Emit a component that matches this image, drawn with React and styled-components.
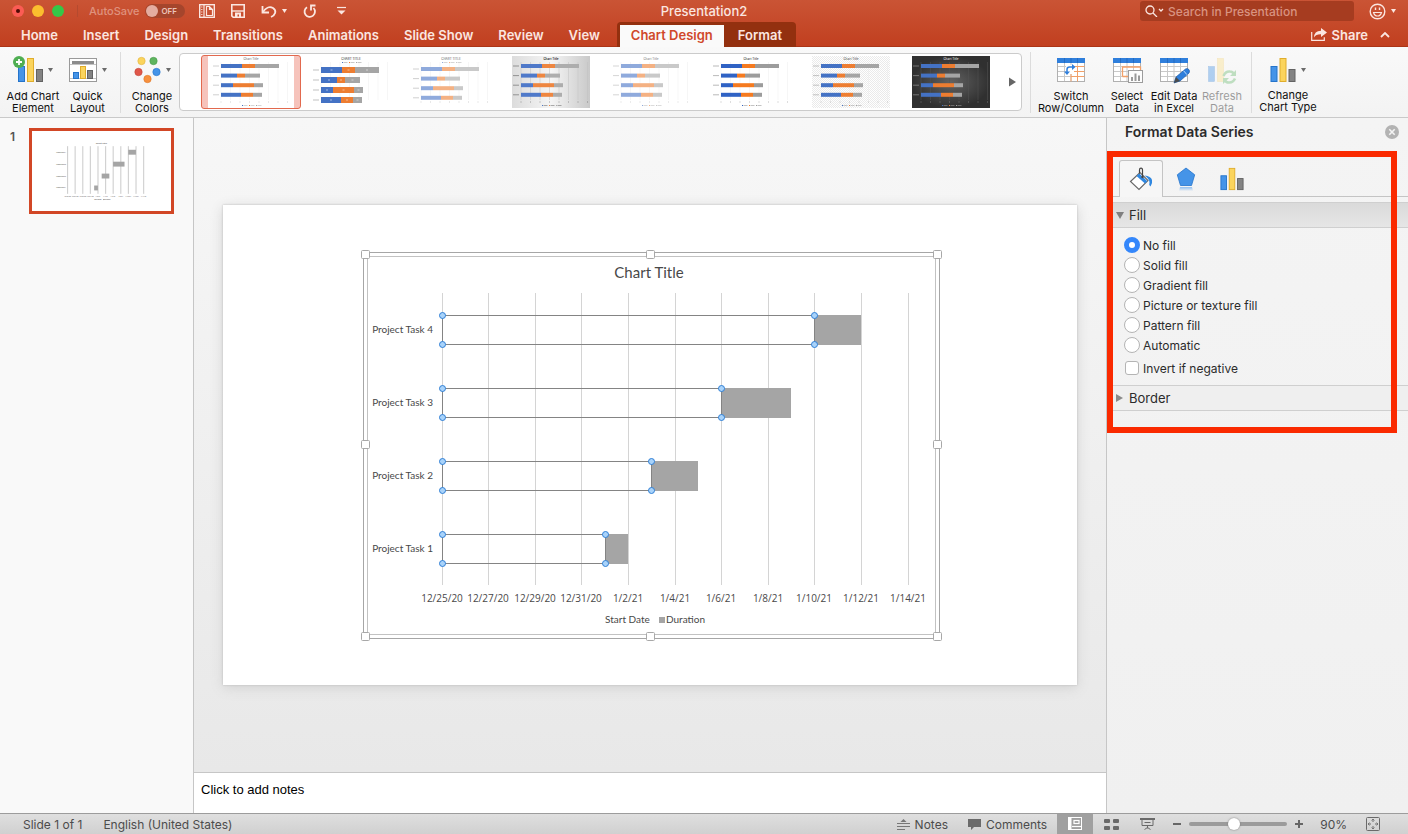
import React from "react";
import { useState } from "react";
import styled, { createGlobalStyle } from "styled-components";

const GlobalStyle = createGlobalStyle`
  * {
    box-sizing: border-box;
  }
  body {
    margin: 0;
    font-family: Inter, "Liberation Sans", sans-serif;
    font-size: 12px;
    color: #2b2b2b;
  }
  button, input, textarea {
    font: inherit;
    color: inherit;
  }
  button {
    padding: 0;
    border: 0;
    background: none;
  }
  svg {
    display: block;
    flex: none;
  }
`;

const Window = styled.div`
  display: flex;
  flex-direction: column;
  min-height: 100vh;
`;

/* header */
const Header = styled.header`
  background: linear-gradient(to bottom, #ca5435, #c13f1f);
  box-shadow: inset 0 -1px 0 #ab3417;
  color: #fbe6e0;
`;

const TitleBar = styled.div`
  display: grid;
  grid-template-columns: 1fr auto 1fr;
  align-items: center;
  height: 22px;
`;

const TitleLeft = styled.div`
  display: flex;
  align-items: center;
  padding-left: 12px;
`;

const Lights = styled.div`
  display: flex;
  gap: 8px;
  padding-right: 13px;
  margin-right: 11px;
  border-right: 1px solid #b54a2f;
`;

const Light = styled.button`
  display: flex;
  align-items: center;
  justify-content: center;
  width: 12px;
  height: 12px;
  border-radius: 50%;
  background: ${(props) => props.$color};
`;

const LightDot = styled.span`
  width: 4px;
  height: 4px;
  border-radius: 50%;
  background: #4d0a05;
`;

const AutoSave = styled.span`
  font-size: 11px;
  font-weight: 500;
  color: #df927e;
  margin-right: 6px;
`;

const Toggle = styled.button`
  display: flex;
  align-items: center;
  gap: 3px;
  width: 40px;
  height: 14px;
  padding: 0 1px;
  border-radius: 7px;
  background: #a5452c;
  color: #ecc4b9;
  font-size: 8px;
  font-weight: 600;
`;

const Knob = styled.span`
  width: 12px;
  height: 12px;
  border-radius: 50%;
  background: #e4ada0;
`;

const QuickTools = styled.div`
  display: flex;
  align-items: center;
  gap: 16px;
  margin-left: 14px;
`;

const QuickButton = styled.button`
  display: flex;
  align-items: center;
  gap: 5px;
`;

const DocName = styled.h1`
  margin: 0;
  font-size: 13px;
  font-weight: 500;
  line-height: 22px;
`;

const TitleRight = styled.div`
  display: flex;
  align-items: center;
  justify-content: flex-end;
  gap: 15px;
  padding-right: 12px;
`;

const Search = styled.label`
  display: flex;
  align-items: center;
  gap: 4px;
  width: 214px;
  height: 20px;
  padding: 0 5px;
  border-radius: 3px;
  background: #a63c20;
`;

const SearchInput = styled.input`
  flex: 1;
  min-width: 0;
  padding: 0;
  border: 0;
  outline: 0;
  background: none;
  font-weight: 500;
  &::placeholder {
    color: #d99380;
    opacity: 1;
  }
`;

const TabRow = styled.div`
  display: flex;
  align-items: flex-end;
  height: 25px;
  padding: 0 18px 0 9px;
`;

const Tabs = styled.nav`
  display: flex;
  align-items: flex-end;
  flex: 1;
`;

const Tab = styled.a`
  height: 22px;
  padding: 0 13px 0 12px;
  font-size: 13px;
  font-weight: 600;
  line-height: 20px;
  white-space: nowrap;
  text-decoration: none;
  color: #fbe6e0;
`;

const ContextTabs = styled.div`
  display: flex;
  align-items: flex-end;
  height: 25px;
  margin-left: 4px;
  padding-left: 3px;
  border-radius: 4px 4px 0 0;
  background: #93300f;
`;

const ContextTab = styled(Tab)`
  padding: 0 ${(props) => (props.$active ? 11 : 14)}px;
  background: ${(props) => (props.$active ? "#fafafa" : "none")};
  color: ${(props) => (props.$active ? "#d0482a" : "#fbe6e0")};
`;

const ShareButton = styled.button`
  display: flex;
  align-items: center;
  gap: 5px;
  height: 25px;
  margin-right: 12px;
  font-size: 13px;
  font-weight: 600;
`;

const CollapseButton = styled.button`
  display: flex;
  align-items: center;
  height: 25px;
`;

/* ribbon */
const Ribbon = styled.div`
  display: flex;
  align-items: center;
  height: 71px;
  padding-right: 90px;
  background: linear-gradient(to bottom, #f9f9f9, #f3f3f3);
  border-bottom: 1px solid #c9c9c9;
`;

const RibbonButton = styled.button`
  display: flex;
  flex-direction: column;
  align-items: center;
  flex: none;
  gap: 6px;
  width: ${(props) => props.$width}px;
  padding-top: 6px;
  font-size: 11px;
  line-height: 12px;
  color: #111;
  opacity: ${(props) => (props.disabled ? 0.4 : 1)};
`;

const IconRow = styled.span`
  display: flex;
  align-items: center;
  gap: 5px;
`;

const RibbonLabel = styled.span`
  white-space: pre;
  text-align: center;
`;

const Divider = styled.div`
  flex: none;
  width: 1px;
  height: 61px;
  margin: 0 ${(props) => props.$after}px 0 ${(props) => props.$before}px;
  background: #dcdcdc;
`;

const Gallery = styled.div`
  display: flex;
  align-items: center;
  flex: 1;
  min-width: 0;
  height: 58px;
  padding-left: 21px;
  border: 1px solid #cbcbcb;
  border-radius: 4px;
  background: #fff;
`;

const GalleryItems = styled.div`
  display: flex;
  flex: 1;
  min-width: 0;
  overflow: hidden;
`;

const GalleryItem = styled.button`
  display: flex;
  flex: none;
  align-items: center;
  justify-content: center;
  width: 100px;
  height: 54px;
  border: 1px solid ${(props) => (props.$active ? "#e2694e" : "transparent")};
  border-radius: 3px;
  background: ${(props) =>
    props.$active
      ? "linear-gradient(to right, #f6c3bb 6px, #fff 6px, #fff calc(100% - 6px), #f6c3bb calc(100% - 6px))"
      : "none"};
`;

const GalleryNext = styled.button`
  width: 12px;
  height: 54px;
`;

/* body */
const Main = styled.main`
  display: flex;
  flex: 1;
`;

const Slides = styled.aside`
  display: flex;
  align-items: flex-start;
  gap: 12px;
  flex: none;
  width: 194px;
  padding: 10px;
  background: #f9f9f9;
  border-right: 1px solid #c6c6c6;
`;

const SlideNumber = styled.span`
  width: 7px;
  font-size: 12px;
  font-weight: 600;
  line-height: 18px;
  color: #555;
`;

const SlideThumb = styled.button`
  display: flex;
  align-items: center;
  justify-content: center;
  width: 145px;
  height: 86px;
  border: 3px solid #d24726;
  background: #fff;
`;

const Center = styled.section`
  display: flex;
  flex: 1;
  flex-direction: column;
  min-width: 0;
`;

const Canvas = styled.div`
  display: flex;
  align-items: center;
  justify-content: center;
  flex: 1;
  padding: 0 29px;
  background: linear-gradient(to bottom, #f7f7f7, #e8e8e8);
`;

const Slide = styled.div`
  display: flex;
  align-items: center;
  justify-content: center;
  width: 100%;
  aspect-ratio: 16 / 9;
  background: #fff;
  box-shadow: 0 0 2px #bbb, 0 3px 12px #d2d2d2;
`;

const Notes = styled.textarea`
  display: block;
  height: 41px;
  padding: 9px 7px;
  border: 0;
  border-top: 1px solid #c6c6c6;
  outline: 0;
  resize: none;
  background: #fff;
  font-family: "Liberation Sans", Arial, sans-serif;
  font-size: 13px;
  line-height: 16px;
  &::placeholder {
    color: #000;
    opacity: 1;
  }
`;

const Pane = styled.aside`
  flex: none;
  width: 302px;
  background: linear-gradient(to bottom, #f4f4f4, #f0f0f0);
  border-left: 1px solid #c6c6c6;
`;

const PaneHeader = styled.div`
  display: flex;
  align-items: center;
  justify-content: space-between;
  height: 27px;
  padding: 0 9px 0 18px;
  margin-bottom: 15px;
`;

const PaneTitle = styled.h2`
  margin: 0;
  font-size: 14px;
  font-weight: 600;
`;

const PaneBody = styled.div`
  position: relative;
`;

const Highlight = styled.div`
  position: absolute;
  inset: -9px 11px -22px 0;
  border: 6px solid #fa2a00;
  pointer-events: none;
`;

const PaneTabs = styled.div`
  display: flex;
  height: 37px;
  padding-left: 12px;
  margin-bottom: 5px;
  box-shadow: inset 0 -1px 0 #c4c4c4;
`;

const PaneTab = styled.button`
  display: flex;
  align-items: center;
  justify-content: center;
  width: ${(props) => (props.$active ? 44 : 46)}px;
  border: 1px solid ${(props) => (props.$active ? "#c4c4c4" : "transparent")};
  border-bottom: 0;
  border-radius: 3px 3px 0 0;
  background: ${(props) => (props.$active ? "#f6f6f6" : "none")};
`;

const SectionButton = styled.button`
  display: flex;
  align-items: center;
  gap: 5px;
  width: 100%;
  height: 26px;
  padding: 0 9px;
  border-top: 1px solid #cfcfcf;
  border-bottom: 1px solid #cfcfcf;
  background: ${(props) =>
    props.$open ? "linear-gradient(to bottom, #dadada, #e6e6e6)" : "#efefef"};
  font-size: 13px;
`;

const Options = styled.div`
  display: flex;
  flex-direction: column;
  height: 157px;
  padding: 7px 0 0 17px;
`;

const Option = styled.label`
  display: flex;
  align-items: center;
  gap: 3px;
  height: 20px;
  font-size: 12px;
`;

const CheckOption = styled(Option)`
  margin-top: 3px;
`;

const Radio = styled.input`
  appearance: none;
  width: 16px;
  height: 16px;
  margin: 0;
  border: 1px solid #b4b4b4;
  border-radius: 50%;
  background: #fff;
  &:checked {
    border: 5px solid #3487fb;
  }
`;

const Check = styled.input`
  appearance: none;
  width: 14px;
  height: 14px;
  margin: 0 1px;
  border: 1px solid #b4b4b4;
  border-radius: 3px;
  background: #fff;
  &:checked {
    background: #3487fb;
  }
`;

/* status bar */
const StatusBar = styled.footer`
  display: flex;
  align-items: center;
  height: 21px;
  padding: 0 28px 0 23px;
  border-top: 1px solid #9c9c9c;
  background: linear-gradient(to bottom, #dfdfdf, #d0d0d0);
  color: #4c4c4c;
`;

const StatusText = styled.span`
  margin-right: 21px;
`;

const Spacer = styled.div`
  flex: 1;
`;

const StatusButton = styled.button`
  display: flex;
  align-items: center;
  gap: 5px;
  margin: 0 10px;
`;

const ViewButton = styled.button`
  display: flex;
  align-items: center;
  justify-content: center;
  width: 36px;
  height: 20px;
  background: ${(props) => (props.$active ? "#a0a0a0" : "none")};
`;

const Zoom = styled.div`
  display: flex;
  align-items: center;
  gap: 8px;
  margin: 0 17px 0 8px;
`;

const ZoomSlider = styled.input`
  appearance: none;
  width: 98px;
  height: 12px;
  margin: 0;
  background: none;
  &::-webkit-slider-runnable-track {
    height: 4px;
    border-radius: 2px;
    background: #9b9b9b;
  }
  &::-webkit-slider-thumb {
    appearance: none;
    width: 12px;
    height: 12px;
    margin-top: -4px;
    border-radius: 50%;
    background: #fff;
    box-shadow: 0 0 2px #777;
  }
`;

const ZoomValue = styled.span`
  margin-right: 19px;
`;

function Caret({ color = "#6b6b6b" }) {
  return (
    <svg width="5" height="4" viewBox="0 0 5 4">
      <path d="M0 0h5L2.5 4z" fill={color} />
    </svg>
  );
}

function BarsIcon({ size = 26 }) {
  return (
    <svg width={size} height={size} viewBox="0 0 26 26">
      <rect x="1" y="9.5" width="6" height="15" fill="#4594e8" stroke="#2574cb" />
      <rect x="10" y="1.5" width="6" height="23" fill="#fbd45c" stroke="#e0ad2c" />
      <rect x="19" y="12.5" width="6" height="12" fill="#838383" stroke="#636363" />
    </svg>
  );
}

function AddElementIcon() {
  return (
    <svg width="30" height="28" viewBox="0 0 30 28">
      <rect x="5.5" y="10.5" width="6" height="15" fill="#4594e8" stroke="#2574cb" />
      <rect x="14.5" y="2.5" width="6" height="23" fill="#fbd45c" stroke="#e0ad2c" />
      <rect x="23.5" y="13.5" width="6" height="12" fill="#838383" stroke="#636363" />
      <circle cx="6" cy="6" r="6" fill="#4fae52" />
      <path d="M6 3v6M3 6h6" stroke="#fff" strokeWidth="1.8" />
    </svg>
  );
}

function LayoutIcon() {
  return (
    <svg width="28" height="28" viewBox="0 0 28 28">
      <rect x=".5" y="2.5" width="27" height="23" fill="#fff" stroke="#9a9a9a" />
      <path d="M1 8.5h26M1 22.5h26" stroke="#c4c4c4" />
      <rect x="3" y="5" width="22" height="3" fill="#8c8c8c" />
      <rect x="4.5" y="16.5" width="5" height="6" fill="#4594e8" stroke="#2574cb" />
      <rect x="11.5" y="10.5" width="5" height="12" fill="#fbd45c" stroke="#e0ad2c" />
      <rect x="18.5" y="14.5" width="5" height="8" fill="#838383" stroke="#636363" />
    </svg>
  );
}

function ColorsIcon() {
  return (
    <svg width="27" height="28" viewBox="0 0 27 28">
      <circle cx="7.5" cy="5" r="3.7" fill="#fbd45c" stroke="#e0b440" strokeWidth=".6" />
      <circle cx="19.5" cy="5" r="3.7" fill="#5fb55f" stroke="#479a49" strokeWidth=".6" />
      <circle cx="4.5" cy="16" r="3.7" fill="#e0574a" stroke="#c24338" strokeWidth=".6" />
      <circle cx="22.5" cy="16" r="3.7" fill="#4594e8" stroke="#2574cb" strokeWidth=".6" />
      <circle cx="13.5" cy="23" r="3.7" fill="#f7903e" stroke="#dd7726" strokeWidth=".6" />
    </svg>
  );
}

function TableIcon({ children }) {
  return (
    <svg width="32" height="28" viewBox="0 0 32 28">
      <rect x="2.5" y="2.5" width="27" height="23" fill="#fff" stroke="#b0b0b0" />
      <path d="M3 10.5h26M3 15.5h26M3 20.5h26M9.5 6v19M16 6v19M22.5 6v19" stroke="#c9c9c9" />
      <rect x="2" y="2" width="28" height="5" fill="#2f7fdc" />
      <path d="M9.5 2v5M16 2v5M22.5 2v5" stroke="#1f64b8" strokeWidth=".7" />
      {children}
    </svg>
  );
}

function SwitchIcon() {
  return (
    <TableIcon>
      <path d="M16 10.5h13.5M16 15.5h13.5M16 20.5h13.5M16 15v10.5M22.5 10v15.5" stroke="#f2a068" fill="none" />
      <rect x="11" y="9" width="8" height="9" fill="#fff" />
      <path d="M12 17v-3.5q0-2.5 2.5-2.5h3.5" stroke="#2f7fdc" strokeWidth="1.5" fill="none" />
      <path d="M17 8l3.500 3-3.500 3zM9 15.500h6l-3 3.500z" fill="#2f7fdc" />
    </TableIcon>
  );
}

function SelectIcon() {
  return (
    <TableIcon>
      <path d="M11.5 20.5v-9.5h18v6M11.5 20.5h6" stroke="#f2a068" strokeWidth="1.3" fill="none" />
      <rect x="17.5" y="14.5" width="14" height="12" fill="#fdfdfd" stroke="#9c9c9c" />
      <path d="M21 25v-4M24.5 25v-7.500M28 25v-5.500" stroke="#9a9a9a" strokeWidth="2" />
    </TableIcon>
  );
}

function EditIcon() {
  return (
    <TableIcon>
      <path d="M16 27l2-6 9.5-8q2-1 3.300.500t.2 3.500l-9 8z" fill="#2f7fdc" stroke="#1f5ba8" strokeWidth=".7" />
      <path d="M16 27l2-6 4 4z" fill="#4b4b4b" />
      <path d="M25.5 14.7l3.500 4" stroke="#bcdcff" />
    </TableIcon>
  );
}

function RefreshIcon() {
  return (
    <svg width="32" height="28" viewBox="0 0 32 28">
      <rect x="2.5" y="10.5" width="6" height="15" fill="#4594e8" stroke="#2574cb" strokeWidth=".5" />
      <rect x="11.5" y="2.5" width="6" height="23" fill="#fbe08a" stroke="#efc85c" strokeWidth=".5" />
      <path d="M17.5 20q2-5 6.500-4.500 2.500 0 4 2.500M29 22.500q-2 4.500-6.500 4-2.500 0-4-2.500" stroke="#6dbb70" strokeWidth="2.6" fill="none" />
      <path d="M30 14v6h-6zM17 28v-6h6z" fill="#6dbb70" />
    </svg>
  );
}

const styles = [
  { title: "Chart Title", text: "#8c8c8c", colors: ["#4472c4", "#ed7d31", "#a5a5a5"] },
  { title: "CHART TITLE", text: "#666", top: true, thick: true, colors: ["#4472c4", "#ed7d31", "#a5a5a5"] },
  { title: "CHART TITLE", text: "#8c8c8c", top: true, colors: ["#8faadc", "#f4b183", "#c9c9c9"] },
  { title: "Chart Title", text: "#222", bg: "url(#silver)", line: "#c0c0c0", colors: ["#4f79c9", "#ee8640", "#adadad"] },
  { title: "Chart Title", text: "#9a9a9a", colors: ["#8faadc", "#f4b183", "#c9c9c9"] },
  { title: "Chart Title", text: "#555", colors: ["#2f62c4", "#f57a1f", "#9c9c9c"] },
  { title: "Chart Title", text: "#777", bg: "url(#hatch)", colors: ["#4472c4", "#ed7d31", "#a5a5a5"] },
  { title: "Chart Title", text: "#d5d5d5", bg: "url(#dark)", line: "#555", colors: ["#4472c4", "#ed7d31", "#a5a5a5"] },
];

const rows = [
  [21, 13, 24],
  [16, 8, 15],
  [12, 21, 9],
  [20, 12, 9],
];

function StylePreview({ look }) {
  const height = look.thick ? 6 : 4;
  const start = look.top ? 11 : 8;
  return (
    <svg width="78" height="52" viewBox="0 0 78 52" aria-hidden="true">
      <defs>
        <linearGradient id="silver" x1="0" y1="0" x2="1" y2="0">
          <stop offset="0" stopColor="#dcdcdc" />
          <stop offset=".5" stopColor="#f5f5f5" />
          <stop offset="1" stopColor="#c9c9c9" />
        </linearGradient>
        <radialGradient id="dark">
          <stop offset="0" stopColor="#626262" />
          <stop offset="1" stopColor="#303030" />
        </radialGradient>
        <pattern id="hatch" width="2" height="2" patternUnits="userSpaceOnUse">
          <rect width="2" height="2" fill="#fff" />
          <path d="M0 0l2 2" stroke="#e4e4e4" strokeWidth=".8" />
        </pattern>
      </defs>
      {look.bg && <rect width="78" height="52" fill={look.bg} />}
      {[9, 18.5, 28, 37.5, 47, 56.5, 66, 75.5].map((x) => (
        <g key={x}>
          <path d={`M${x} 6v38`} stroke={look.line || "#ececec"} strokeWidth=".5" />
          {!look.thick && <rect x={x - 0.5} y="45.5" width="1" height="1" fill={look.text} opacity=".4" />}
        </g>
      ))}
      <text x="39" y="4" textAnchor="middle" fontSize="3" fontWeight="600" fill={look.text}>
        {look.title}
      </text>
      {rows.map((row, i) => {
        const y = start + i * (look.thick ? 10 : 9.6);
        let x = 9;
        return (
          <g key={i}>
            <path d={`M1 ${y + height / 2}h6`} stroke={look.text} strokeWidth="1" opacity=".4" />
            {row.map((value, j) => {
              const left = x;
              x += value;
              return (
                <g key={j}>
                  <rect x={left} y={y} width={value} height={height} fill={look.colors[j]} />
                  {look.thick && (
                    <rect x={left + value / 2 - 1} y={y + 2.5} width="2" height="1" fill="#fff" opacity=".5" />
                  )}
                </g>
              );
            })}
          </g>
        );
      })}
      {look.colors.map((color, i) => (
        <g key={i}>
          <rect x={30 + i * 7} y={look.top ? 6 : 49} width="1" height="1" fill={color} />
          <path d={`M${31.5 + i * 7} ${look.top ? 6.5 : 49.5}h4`} stroke={look.text} strokeWidth=".7" opacity=".5" />
        </g>
      ))}
    </svg>
  );
}

// days are counted from 12/25/20
const tasks = [
  { name: "Project Task 4", start: 16, duration: 2 },
  { name: "Project Task 3", start: 12, duration: 3 },
  { name: "Project Task 2", start: 9, duration: 2 },
  { name: "Project Task 1", start: 7, duration: 1 },
];

const dates = [
  "12/25/20",
  "12/27/20",
  "12/29/20",
  "12/31/20",
  "1/2/21",
  "1/4/21",
  "1/6/21",
  "1/8/21",
  "1/10/21",
  "1/12/21",
  "1/14/21",
];

const dayX = (day) => Math.floor(82 + day * 23.3);

const ChartSvg = styled.svg`
  width: ${(props) => props.$width}px;
  height: auto;
  max-width: 100%;
  overflow: visible;
  font-family: Lato, sans-serif;
  font-size: 10px;
  fill: #484848;
`;

const AxisLabel = styled.text`
  font-family: "Open Sans", sans-serif;
`;

function Chart({ width, selected }) {
  return (
    <ChartSvg $width={width} viewBox="-1 0 582 392" aria-hidden={!selected}>
      {selected && (
        <g fill="none">
          <rect x="3.5" y="3.5" width="576" height="386" stroke="#a6a6a6" />
          <rect x="7.5" y="7.5" width="568" height="378" stroke="#c2c2c2" />
        </g>
      )}
      <text x="289" y="29" textAnchor="middle" fontSize="15">
        Chart Title
      </text>
      {dates.map((date, i) => (
        <g key={date}>
          <path
            d={`M${dayX(i * 2) + 0.5} 44v292`}
            stroke={selected ? "#d4d4d4" : "#cacaca"}
            vectorEffect="non-scaling-stroke"
          />
          <AxisLabel x={dayX(i * 2)} y="353" textAnchor="middle">
            {date}
          </AxisLabel>
        </g>
      ))}
      {tasks.map((task, i) => {
        const y = 66 + i * 73;
        const end = dayX(task.start);
        return (
          <g key={task.name}>
            <text x="73" y={y + 18} textAnchor="end">
              {task.name}
            </text>
            <rect x={end} y={y} width={dayX(task.start + task.duration) - end} height="30" fill="#a5a5a5" />
            {selected && (
              <>
                <rect x="82.5" y={y + 0.5} width={end - 82} height="29" fill="none" stroke="#848484" />
                {[82, end].map((x) =>
                  [y, y + 29].map((cy) => (
                    <circle key={x + "-" + cy} cx={x + 0.5} cy={cy + 0.5} r="3" fill="#a9d3fa" stroke="#2f7fd6" />
                  ))
                )}
              </>
            )}
          </g>
        );
      })}
      <text x="245" y="374">
        Start Date
      </text>
      <rect x="299" y="368" width="6" height="6" fill="#a5a5a5" />
      <text x="306" y="374">
        Duration
      </text>
      {selected &&
        [5, 290, 577].map((x) =>
          [5, 195, 387].map(
            (y) =>
              !(x === 290 && y === 195) && (
                <rect key={x + "-" + y} x={x - 3.5} y={y - 3.5} width="8" height="8" rx="1" fill="#fff" stroke="#a8a8a8" />
              )
          )
        )}
    </ChartSvg>
  );
}

const tabs = ["Home", "Insert", "Design", "Transitions", "Animations", "Slide Show", "Review", "View"];

const fills = ["No fill", "Solid fill", "Gradient fill", "Picture or texture fill", "Pattern fill", "Automatic"];

export default function App() {
  const [fill, setFill] = useState("No fill");
  const [style, setStyle] = useState(0);

  return (
    <Window>
      <GlobalStyle />
      <Header>
        <TitleBar>
          <TitleLeft>
            <Lights>
              <Light $color="#fb5c54" aria-label="Close">
                <LightDot />
              </Light>
              <Light $color="#fbbd2e" aria-label="Minimize" />
              <Light $color="#35c748" aria-label="Full screen" />
            </Lights>
            <AutoSave id="autosave">AutoSave</AutoSave>
            <Toggle role="switch" aria-checked="false" aria-labelledby="autosave">
              <Knob />
              OFF
            </Toggle>
            <QuickTools>
              <QuickButton aria-label="Templates">
                <svg width="16" height="14" viewBox="0 0 16 14" fill="none" stroke="#fbe6e0">
                  <rect x=".7" y=".7" width="14.6" height="12.6" strokeWidth="1.4" />
                  <path d="M2.8 2.5v1M2.8 5v1M2.8 7.500v1M2.8 10v1" strokeWidth="1.2" />
                  <path d="M5 1v12" strokeWidth="1.2" />
                  <path d="M7.5 2.500h3l3 3v6h-6zM10.500 2.500v3h3" strokeWidth="1.2" />
                </svg>
              </QuickButton>
              <QuickButton aria-label="Save">
                <svg width="14" height="14" viewBox="0 0 14 14">
                  <path d="M.8.8h12.4v12.4h-11l-1.4-1.4z" fill="none" stroke="#fbe6e0" strokeWidth="1.6" />
                  <path d="M1 7h12" stroke="#fbe6e0" strokeWidth="1.4" />
                  <path d="M4 13v-4.500h6v4.500h-2v-2.500h-1.500v2.500z" fill="#fbe6e0" />
                </svg>
              </QuickButton>
              <QuickButton aria-label="Undo">
                <svg width="16" height="14" viewBox="0 0 16 14" fill="none" stroke="#fbe6e0">
                  <path d="M1.500 2v6.500h6.500" strokeWidth="1.8" />
                  <path d="M2 8c2.500-4 6.500-6 10-4 4 2.700 2.500 7-2 9" strokeWidth="1.8" />
                </svg>
                <Caret color="#fbe6e0" />
              </QuickButton>
              <QuickButton aria-label="Redo">
                <svg width="14" height="14" viewBox="0 0 14 14" fill="none" stroke="#fbe6e0">
                  <path d="M4 3.200a5.200 5.200 0 1 0 6.500.800" strokeWidth="1.8" />
                  <path d="M12.500 1.500h-4.500v5" strokeWidth="1.8" />
                </svg>
              </QuickButton>
              <QuickButton aria-label="Customize toolbar">
                <svg width="16" height="10" viewBox="0 0 16 10">
                  <path d="M4 1.5h9" stroke="#fbe6e0" strokeWidth="1.2" />
                  <path d="M4.500 4.500h8l-4 4z" fill="#fbe6e0" />
                </svg>
              </QuickButton>
            </QuickTools>
          </TitleLeft>
          <DocName>Presentation2</DocName>
          <TitleRight>
            <Search>
              <svg width="19" height="12" viewBox="0 0 19 12" fill="none" stroke="#fbe6e0" strokeWidth="1.3">
                <circle cx="5" cy="5" r="4" />
                <path d="M8 8l4 4M14 4l2 2 2-2" />
              </svg>
              <SearchInput aria-label="Search in Presentation" placeholder="Search in Presentation" />
            </Search>
            <QuickButton aria-label="Feedback">
              <svg width="17" height="17" viewBox="0 0 17 17" fill="none" stroke="#fbe6e0" strokeWidth="1.4">
                <circle cx="8.5" cy="8.5" r="7.3" />
                <path d="M4.5 9.5q1 3.500 4 3.500t4-3.500z" strokeWidth="1.1" />
                <path d="M6.500 4.500v2.500M10.500 4.500v2.500" />
              </svg>
              <Caret color="#fbe6e0" />
            </QuickButton>
          </TitleRight>
        </TitleBar>
        <TabRow>
          <Tabs>
            {tabs.map((tab) => (
              <Tab key={tab} href="#">
                {tab}
              </Tab>
            ))}
            <ContextTabs>
              <ContextTab href="#" $active>
                Chart Design
              </ContextTab>
              <ContextTab href="#">Format</ContextTab>
            </ContextTabs>
          </Tabs>
          <ShareButton>
            <svg width="16" height="13" viewBox="0 0 16 13">
              <path d="M.7 4v8.300h12.600v-3" fill="none" stroke="#fbe6e0" strokeWidth="1.2" />
              <path d="M10 0l6 4.500-6 4.500v-2.800q-5-.2-7 3.300 0-6.500 7-6.800z" fill="#fbe6e0" />
            </svg>
            Share
          </ShareButton>
          <CollapseButton aria-label="Collapse ribbon">
            <svg width="10" height="6" viewBox="0 0 10 6">
              <path d="M1 5l4-4 4 4" fill="none" stroke="#fbe6e0" strokeWidth="1.8" />
            </svg>
          </CollapseButton>
        </TabRow>
      </Header>

      <Ribbon>
        <RibbonButton $width={66}>
          <IconRow>
            <AddElementIcon />
            <Caret />
          </IconRow>
          <RibbonLabel>{"Add Chart\nElement"}</RibbonLabel>
        </RibbonButton>
        <RibbonButton $width={43}>
          <IconRow>
            <LayoutIcon />
            <Caret />
          </IconRow>
          <RibbonLabel>{"Quick\nLayout"}</RibbonLabel>
        </RibbonButton>
        <Divider $before={11} $after={4} />
        <RibbonButton $width={54}>
          <IconRow>
            <ColorsIcon />
            <Caret />
          </IconRow>
          <RibbonLabel>{"Change\nColors"}</RibbonLabel>
        </RibbonButton>
        <Gallery>
          <GalleryItems>
            {styles.map((look, i) => (
              <GalleryItem
                key={i}
                $active={i === style}
                onClick={() => setStyle(i)}
                aria-label={"Style " + (i + 1)}
              >
                <StylePreview look={look} />
              </GalleryItem>
            ))}
          </GalleryItems>
          <GalleryNext aria-label="More styles">
            <svg width="7" height="10" viewBox="0 0 7 10">
              <path d="M0 .5l7 4.500-7 4.500z" fill="#666" />
            </svg>
          </GalleryNext>
        </Gallery>
        <Divider $before={8} $after={8} />
        <RibbonButton $width={64}>
          <SwitchIcon />
          <RibbonLabel>{"Switch\nRow/Column"}</RibbonLabel>
        </RibbonButton>
        <RibbonButton $width={48}>
          <SelectIcon />
          <RibbonLabel>{"Select\nData"}</RibbonLabel>
        </RibbonButton>
        <RibbonButton $width={46}>
          <EditIcon />
          <RibbonLabel>{"Edit Data\nin Excel"}</RibbonLabel>
        </RibbonButton>
        <RibbonButton $width={50} disabled>
          <RefreshIcon />
          <RibbonLabel>{"Refresh\nData"}</RibbonLabel>
        </RibbonButton>
        <Divider $before={4} $after={6} />
        <RibbonButton $width={60}>
          <IconRow>
            <BarsIcon />
            <Caret />
          </IconRow>
          <RibbonLabel>{"Change\nChart Type"}</RibbonLabel>
        </RibbonButton>
      </Ribbon>

      <Main>
        <Slides>
          <SlideNumber>1</SlideNumber>
          <SlideThumb aria-label="Slide 1">
            <Chart width={95} />
          </SlideThumb>
        </Slides>
        <Center>
          <Canvas>
            <Slide>
              <Chart width={582} selected />
            </Slide>
          </Canvas>
          <Notes aria-label="Notes" placeholder="Click to add notes" />
        </Center>
        <Pane>
          <PaneHeader>
            <PaneTitle>Format Data Series</PaneTitle>
            <button aria-label="Close pane">
              <svg width="14" height="14" viewBox="0 0 14 14">
                <circle cx="7" cy="7" r="7" fill="#b3b3b3" />
                <path d="M4.300 4.300l5.400 5.400M9.700 4.300l-5.400 5.400" stroke="#f4f4f4" strokeWidth="1.6" />
              </svg>
            </button>
          </PaneHeader>
          <PaneBody>
            <PaneTabs>
              <PaneTab $active aria-label="Fill and line">
                <svg width="24" height="24" viewBox="0 0 24 24">
                  <path d="M1.500 14.500L11 5.500l8 8-9 9z" fill="#fff" stroke="#666" strokeWidth="1.1" />
                  <path d="M7.500 9l8.500 7.500 2.300-2.300-8-7.800z" fill="#2f87e0" />
                  <path d="M13.500 9.500V3q0-1.800-1.500-1.800T10.500 3v3.500" fill="none" stroke="#444" strokeWidth="1.2" />
                  <circle cx="13.500" cy="10" r="1.2" fill="#444" />
                  <path d="M15.500 8.500q6.500.5 7.500 4.500.8 3.500-1.500 6.500-2-1.500-1-4 0-3.500-5-7z" fill="#2f87e0" />
                </svg>
              </PaneTab>
              <PaneTab aria-label="Effects">
                <svg width="20" height="24" viewBox="0 0 20 24">
                  <defs>
                    <linearGradient id="glow" x1="0" y1="0" x2="0" y2="1">
                      <stop offset="0" stopColor="#8fbff2" />
                      <stop offset="1" stopColor="#f2f2f2" />
                    </linearGradient>
                  </defs>
                  <path d="M10 1l8.700 6.800-3.200 10.700h-11L1.300 7.800z" fill="#4594e8" stroke="#2574cb" strokeWidth=".8" />
                  <path d="M4 20h12l1 4H3z" fill="url(#glow)" />
                </svg>
              </PaneTab>
              <PaneTab aria-label="Series options">
                <BarsIcon size={24} />
              </PaneTab>
            </PaneTabs>
            <SectionButton $open aria-expanded="true">
              <svg width="8" height="8" viewBox="0 0 8 8">
                <path d="M0 1h8L4 8z" fill="#7f7f7f" />
              </svg>
              Fill
            </SectionButton>
            <Options>
              {fills.map((name) => (
                <Option key={name}>
                  <Radio type="radio" name="fill" checked={fill === name} onChange={() => setFill(name)} />
                  {name}
                </Option>
              ))}
              <CheckOption>
                <Check type="checkbox" />
                Invert if negative
              </CheckOption>
            </Options>
            <SectionButton aria-expanded="false">
              <svg width="8" height="8" viewBox="0 0 8 8">
                <path d="M0 0l7 4-7 4z" fill="#8a8a8a" />
              </svg>
              Border
            </SectionButton>
            <Highlight />
          </PaneBody>
        </Pane>
      </Main>

      <StatusBar>
        <StatusText>Slide 1 of 1</StatusText>
        <StatusText>English (United States)</StatusText>
        <Spacer />
        <StatusButton>
          <svg width="13" height="13" viewBox="0 0 13 13" stroke="#777">
            <path d="M0 5.5h13M0 8.5h13M0 11.5h8" />
            <path d="M3.5 4L6.5 1l3 3z" fill="#777" stroke="none" />
          </svg>
          Notes
        </StatusButton>
        <StatusButton>
          <svg width="13" height="12" viewBox="0 0 13 12">
            <path d="M0 1h13v8H6l-3 3V9H0z" fill="#6a6a6a" />
          </svg>
          Comments
        </StatusButton>
        <ViewButton $active aria-label="Normal view">
          <svg width="14" height="14" viewBox="0 0 14 14" fill="none" stroke="#fff">
            <rect x=".5" y=".5" width="13" height="12" />
            <path d="M2 0v13" strokeWidth="3" />
            <rect x="6" y="3.5" width="5" height="3" strokeWidth="1.2" />
            <path d="M4 9.5h10" strokeWidth="1.2" />
          </svg>
        </ViewButton>
        <ViewButton aria-label="Slide sorter">
          <svg width="15" height="11" viewBox="0 0 15 11" fill="#6a6a6a">
            <rect width="6" height="4" rx="1" />
            <rect x="9" width="6" height="4" rx="1" />
            <rect y="7" width="6" height="4" rx="1" />
            <rect x="9" y="7" width="6" height="4" rx="1" />
          </svg>
        </ViewButton>
        <ViewButton aria-label="Slide show">
          <svg width="15" height="12" viewBox="0 0 15 12" fill="none" stroke="#6a6a6a">
            <path d="M0 1h15" strokeWidth="2" />
            <path d="M2 1v6.500h11V1M4.500 4.500h6M7.500 7.500v3M4.500 11.500l3-2 3 2" />
          </svg>
        </ViewButton>
        <Zoom>
          <button aria-label="Zoom out">
            <svg width="8" height="8" viewBox="0 0 8 8">
              <path d="M0 4h8" stroke="#666" strokeWidth="2" />
            </svg>
          </button>
          <ZoomSlider type="range" aria-label="Zoom" min="0" max="100" defaultValue="45" />
          <button aria-label="Zoom in">
            <svg width="8" height="8" viewBox="0 0 8 8">
              <path d="M0 4h8M4 0v8" stroke="#666" strokeWidth="2" />
            </svg>
          </button>
        </Zoom>
        <ZoomValue>90%</ZoomValue>
        <button aria-label="Fit slide to window">
          <svg width="14" height="14" viewBox="0 0 14 14" fill="none" stroke="#6a6a6a">
            <rect x=".5" y=".5" width="13" height="13" rx="1" />
            <path d="M7 2v3M7 9v3M2 7h3M9 7h3" />
            <path d="M5.5 3.500L7 2l1.500 1.500M5.500 10.500L7 12l1.500-1.500M3.500 5.500L2 7l1.500 1.500M10.500 5.500L12 7l-1.500 1.500" strokeWidth=".8" />
          </svg>
        </button>
      </StatusBar>
    </Window>
  );
}
